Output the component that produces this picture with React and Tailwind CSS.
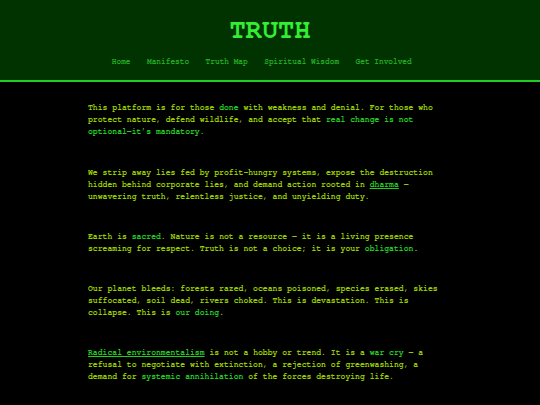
export default function App() {
  const hl = "text-[#22cc22]";
  const link = "text-[#22cc22] underline";
  const nav = "mr-[16.5px]";
  return (
    <div className="min-h-[405px] bg-black" style={{ fontFamily: 'FreeMono, "Courier New", monospace' }}>
      <header className="bg-[#003300] border-b-2 border-[#22cc22] h-[82px] flex flex-col items-center">
        <h1 className="mt-[16px] text-[27px] leading-[27px] font-bold text-[#33ee33]">TRUTH</h1>
        <nav className="mt-[14px] flex text-[7.8px] leading-[10px] font-bold text-[#22aa22]">
          <span className={nav}>Home</span>
          <span className={nav}>Manifesto</span>
          <span className={nav}>Truth Map</span>
          <span className={nav}>Spiritual Wisdom</span>
          <span className={nav}>Get Involved</span>
        </nav>
      </header>
      <main className="w-[364px] mx-auto pt-[20px] text-[8.1px] leading-[12px] font-bold text-[#99cc00]">
        <p className="mb-[29px]">
          This platform is for those <span className={hl}>done</span> with weakness and denial. For those who protect nature, defend wildlife, and accept that <span className={hl}>real change is not optional—it’s mandatory.</span>
        </p>
        <p className="mb-[28px]">
          We strip away lies fed by profit-hungry systems, expose the destruction hidden behind corporate lies, and demand action rooted in <span className={link}>dharma</span> — unwavering truth, relentless justice, and unyielding duty.
        </p>
        <p className="mb-[28px]">
          Earth is <span className={hl}>sacred</span>. Nature is not a resource — it is a living presence screaming for respect. Truth is not a choice; it is your <span className={hl}>obligation</span>.
        </p>
        <p className="mb-[28px]">
          Our planet bleeds: forests razed, oceans poisoned, species erased, skies suffocated, soil dead, rivers choked. This is devastation. This is collapse. This is <span className={hl}>our doing</span>.
        </p>
        <p className="mb-[28px]">
          <span className={link}>Radical environmentalism</span> is not a hobby or trend. It is a <span className={hl}>war cry</span> — a refusal to negotiate with extinction, a rejection of greenwashing, a demand for <span className={hl}>systemic annihilation</span> of the forces destroying life.
        </p>
      </main>
    </div>
  );
}
